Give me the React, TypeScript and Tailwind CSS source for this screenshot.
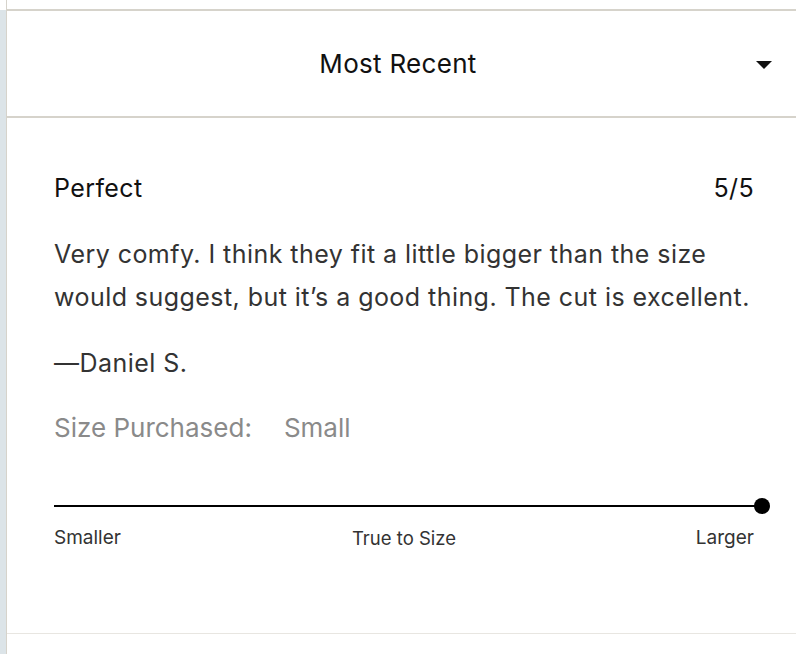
const font = { fontFamily: 'Inter, "Liberation Sans", sans-serif' };

const App = () => {
  return (
    <div className="flex h-[654px] w-[796px] overflow-hidden bg-white" style={font}>
      {/* left edge strip */}
      <div className="flex w-[6px] flex-col">
        <div className="h-[10px] bg-white" />
        <div className="flex-1 bg-[#dce4e8]" />
      </div>

      <div className="flex flex-1 flex-col border-l border-[#d6d3cb] pt-[9px]">
        {/* sort dropdown */}
        <div className="relative flex h-[109px] items-center justify-center border-y-2 border-[#d6d3cb] pr-[7px]">
          <span className="text-[26px] leading-none tracking-[0.3px] text-[#111]">Most Recent</span>
          <svg className="absolute right-[24px] top-[50%] -mt-[3px]" width="16" height="8" viewBox="0 0 16 8">
            <path d="M0 0h16L8 8z" fill="#111" />
          </svg>
        </div>

        {/* review */}
        <div className="flex flex-1 flex-col border-b border-[#e8e6e1] pl-[47px] pr-[42px] pt-[54px]">
          <div className="flex items-center justify-between text-[25px] leading-[32px] tracking-[0.4px] text-[#111]">
            <span>Perfect</span>
            <span>5/5</span>
          </div>
          <p className="mt-[29px] whitespace-nowrap text-[25px] leading-[43px] tracking-[0.45px] text-[#333]">
            Very comfy. I think they fit a little bigger than the size
            <br />
            would suggest, but it’s a good thing. The cut is excellent.
          </p>
          <p className="mt-[28px] text-[25px] leading-[32px] tracking-[0.45px] text-[#333]">—Daniel S.</p>
          <div className="mt-[33px] flex gap-[32px] text-[26px] leading-[32px] text-[#8a8a8a]">
            <span>Size Purchased:</span>
            <span>Small</span>
          </div>

          {/* fit slider */}
          <div className="relative mt-[61px] mr-[-8px] h-[2px] bg-black">
            <div className="absolute right-[-8px] top-[-7px] h-[16px] w-[16px] rounded-full bg-black" />
          </div>
          <div className="mt-[19px] grid grid-cols-3 text-[19px] leading-[24px] text-[#333]">
            <span>Smaller</span>
            <span className="text-center text-[18.5px]">True to Size</span>
            <span className="text-right">Larger</span>
          </div>
        </div>
        <div className="h-[20px]" />
      </div>
    </div>
  );
};

export default App;
